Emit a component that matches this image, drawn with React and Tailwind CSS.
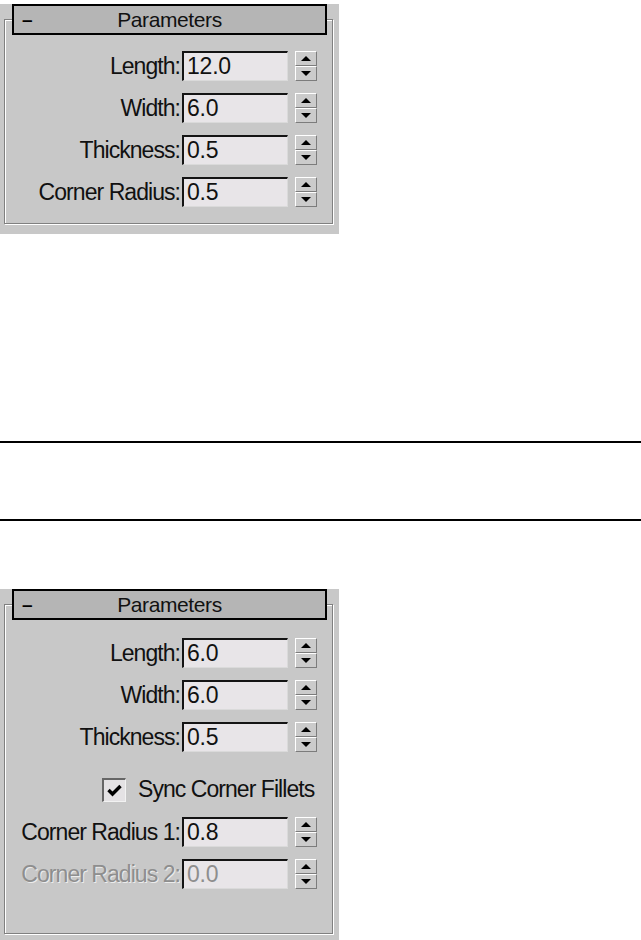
import React from "react";

const rowsTop = [
  { label: "Length:", value: "12.0" },
  { label: "Width:", value: "6.0" },
  { label: "Thickness:", value: "0.5" },
  { label: "Corner Radius:", value: "0.5" },
];

const rowsBottom = [
  { label: "Length:", value: "6.0" },
  { label: "Width:", value: "6.0" },
  { label: "Thickness:", value: "0.5" },
];

const Spinner = () => (
  <div className="ml-[7px] flex h-[30px] w-[22px] flex-col">
    <div className="flex h-[15px] items-center justify-center border border-t-white border-l-white border-r-[#7c7c7c] border-b-[#7c7c7c] bg-[#cbcbcb]">
      <svg width="10" height="5" viewBox="0 0 10 5">
        <path d="M5 0L10 5H0z" fill="#000" />
      </svg>
    </div>
    <div className="flex h-[15px] items-center justify-center border border-t-white border-l-white border-r-[#7c7c7c] border-b-[#7c7c7c] bg-[#cbcbcb]">
      <svg width="10" height="5" viewBox="0 0 10 5">
        <path d="M0 0H10L5 5z" fill="#000" />
      </svg>
    </div>
  </div>
);

const Row = ({ label, value, disabled }) => (
  <div className="flex h-[30px] items-center">
    <div
      className={
        "w-[175px] whitespace-nowrap text-right text-[23px] leading-none tracking-[-0.95px] " +
        (disabled ? "text-[#8e8e8e] [text-shadow:1px_1px_0_#ececec]" : "text-[#111]")
      }
    >
      {label}
    </div>
    <div
      className={
        "ml-[2px] flex h-[30px] w-[106px] items-center border-t-2 border-l-2 border-r border-b border-t-[#141414] border-l-[#141414] border-r-[#dadada] border-b-[#dadada] bg-[#e8e5e8] pl-[3px] text-[23px] leading-none tracking-[-0.2px] " +
        (disabled ? "text-[#8e8e8e]" : "text-[#111]")
      }
    >
      {value}
    </div>
    <Spinner />
  </div>
);

const Header = () => (
  <div className="relative z-10 mx-[12px] mt-[4px] flex h-[31px] items-center border-2 border-black bg-[#b5b5b5]">
    <span className="absolute left-[8px] top-[2px] text-[19px] font-bold leading-[24px]">–</span>
    <div className="w-full text-center text-[21px] leading-none tracking-[-0.4px] text-[#111]">
      Parameters
    </div>
  </div>
);

const Panel = ({ height, frameHeight, children }) => (
  <div className={"w-[339px] bg-[#c8c8c8] " + height}>
    <Header />
    <div
      className={
        "ml-[4px] mt-[-16px] w-[329px] border border-[#808080] shadow-[inset_1px_1px_0_#ffffff,1px_1px_0_#ffffff] " +
        frameHeight
      }
    >
      {children}
    </div>
  </div>
);

export default function App() {
  return (
    <div className="min-h-[940px] bg-white font-['Liberation_Sans',Arial,sans-serif] text-black">
      <Panel height="h-[230px]" frameHeight="h-[205px]">
        <div className="flex flex-col gap-[12px] pt-[31px]">
          {rowsTop.map((r) => (
            <Row key={r.label} {...r} />
          ))}
        </div>
      </Panel>

      <div className="mt-[207px] h-[2px] bg-black" />
      <div className="mt-[76px] h-[2px] bg-black" />

      <div className="mt-[68px]">
        <Panel height="h-[355px]" frameHeight="h-[330px]">
          <div className="flex flex-col pt-[33px]">
            <div className="flex flex-col gap-[12px]">
              {rowsBottom.map((r) => (
                <Row key={r.label} {...r} />
              ))}
            </div>

            <div className="ml-[97px] mt-[25px] flex h-[25px] items-center">
              <div className="flex h-[24px] w-[24px] items-center justify-center border-t-2 border-l-2 border-r border-b border-t-[#666] border-l-[#666] border-r-[#f2f2f2] border-b-[#f2f2f2] bg-[#e4e2e4]">
                <svg width="15" height="13" viewBox="0 0 15 13">
                  <path d="M1.5 6L5.5 10L13.5 2" stroke="#000" strokeWidth="3.4" fill="none" />
                </svg>
              </div>
              <span className="ml-[12px] whitespace-nowrap text-[23px] leading-none tracking-[-0.95px] text-[#111]">
                Sync Corner Fillets
              </span>
            </div>

            <div className="mt-[15px] flex flex-col gap-[12px]">
              <Row label="Corner Radius 1:" value="0.8" />
              <Row label="Corner Radius 2:" value="0.0" disabled />
            </div>
          </div>
        </Panel>
      </div>
    </div>
  );
}
